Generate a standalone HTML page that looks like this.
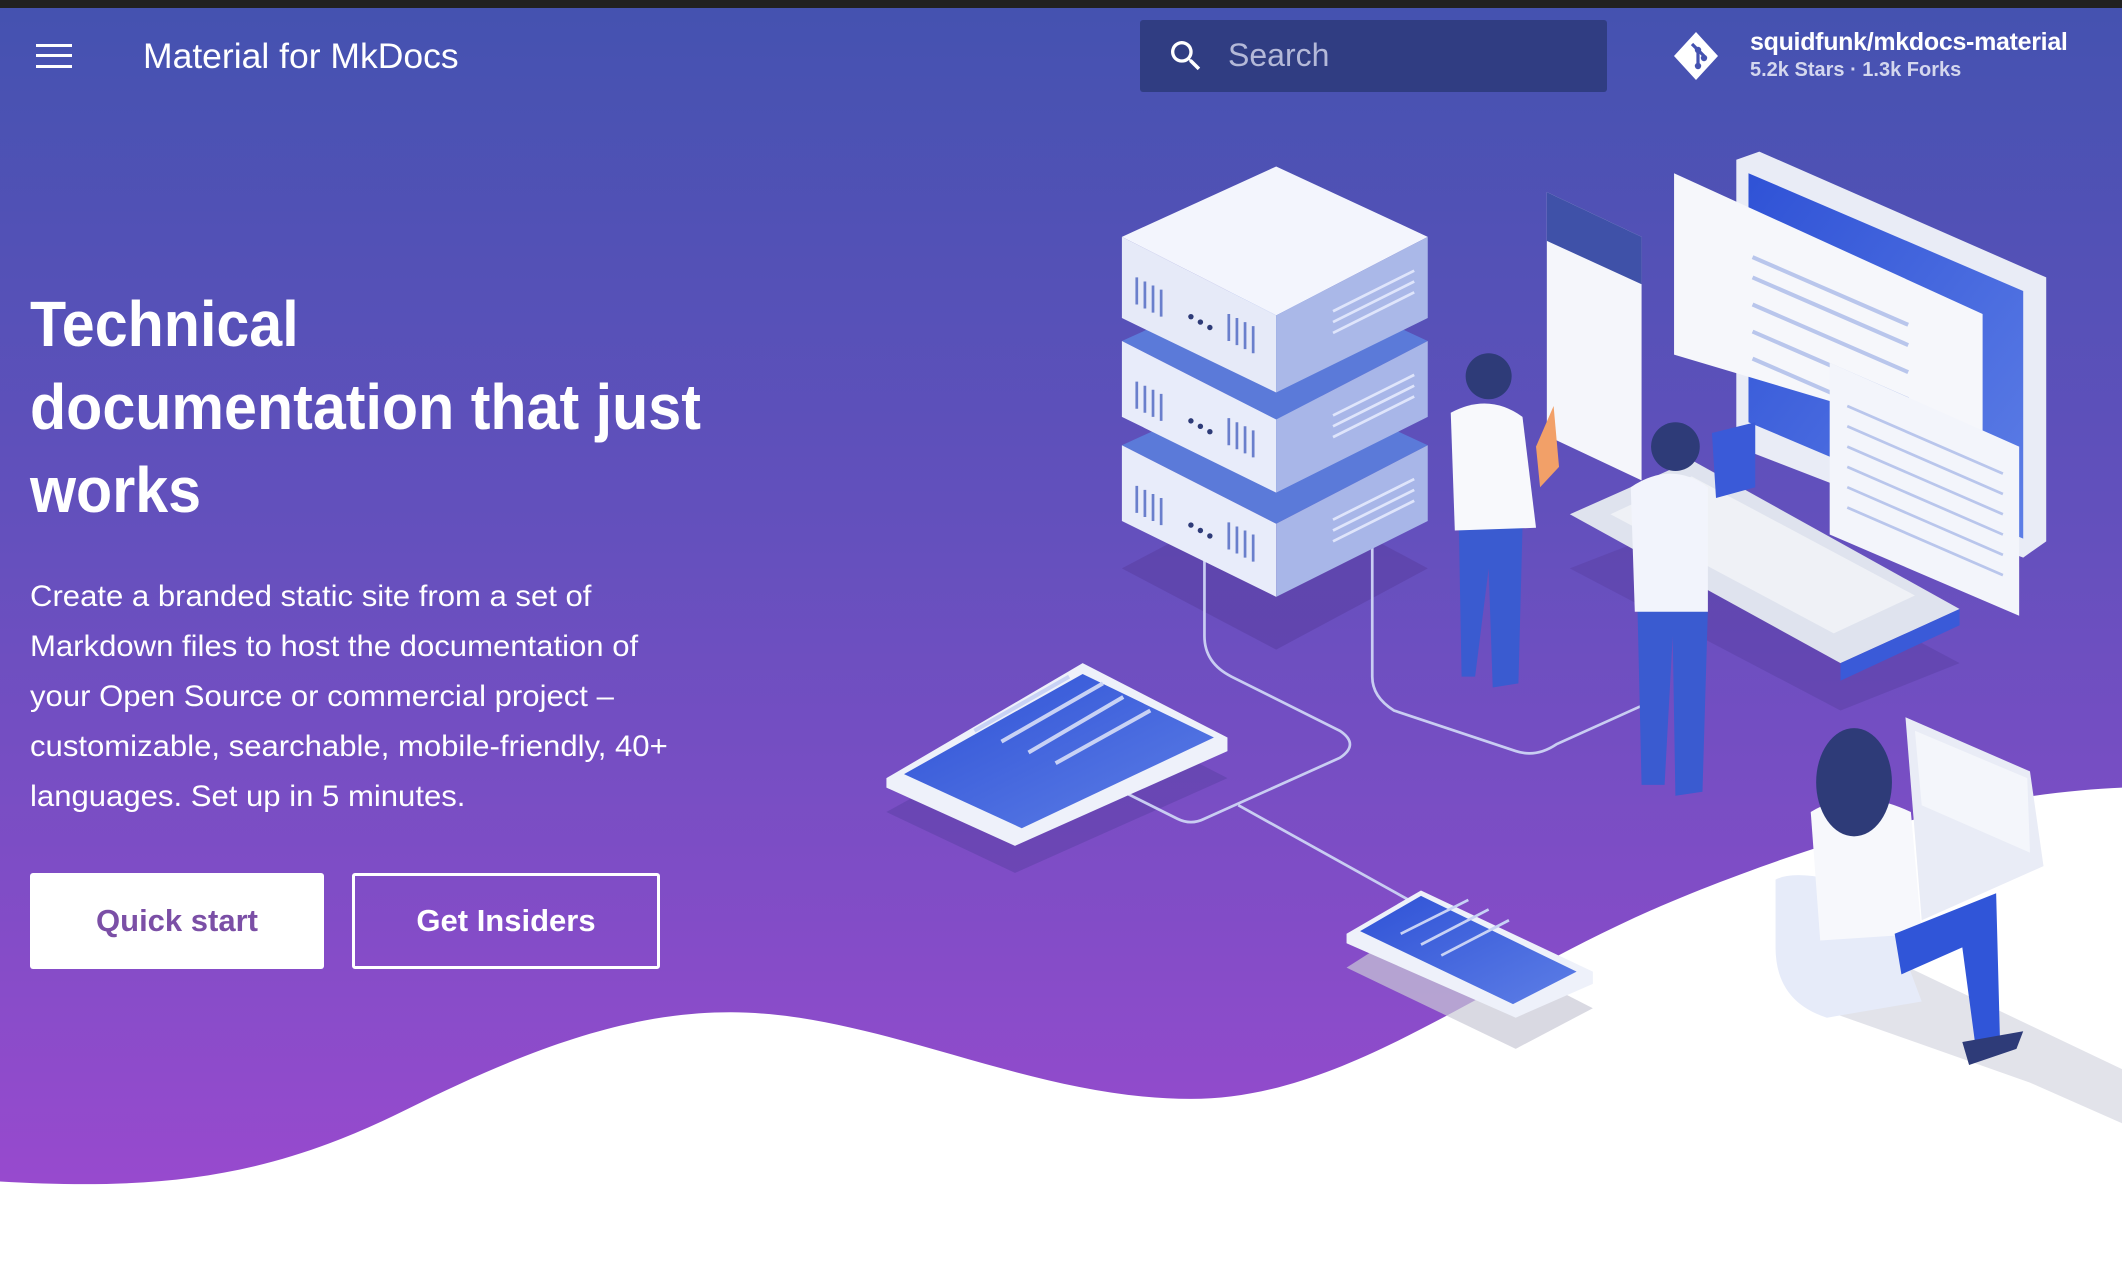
<!DOCTYPE html>
<html><head><meta charset="utf-8"><style>
*{margin:0;padding:0;box-sizing:border-box}
html,body{width:2122px;height:1264px;overflow:hidden;background:#fff;font-family:"Liberation Sans",sans-serif}
.bg{position:absolute;left:0;top:0;width:2122px;height:1264px}
.topbar{position:absolute;left:0;top:0;width:2122px;height:8px;background:#212121}
.ham{position:absolute;left:36px;top:44px;width:36px;height:24px}
.ham i{position:absolute;left:0;width:36px;height:3px;background:#fff}
.title{position:absolute;left:143px;top:36px;color:#fff;font-size:35.5px;white-space:nowrap}
.search{position:absolute;left:1140px;top:20px;width:467px;height:72px;background:#303d82;border-radius:3px}
.search span{position:absolute;left:88px;top:17px;color:#b4b9d8;font-size:32px}
.repo{position:absolute;left:1750px;top:28px;color:#fff;white-space:nowrap}
.repo b{display:block;font-size:25px;letter-spacing:-0.3px}
.repo small{display:block;font-size:20px;color:#d4d7ee;font-weight:bold;margin-top:2px}
h1{position:absolute;left:30px;top:283px;color:#fff;font-size:64px;line-height:83px;font-weight:bold;white-space:nowrap}
h1 span{display:block;transform:scaleX(0.925);transform-origin:left}
p{position:absolute;left:30px;top:572px;color:#fff;font-size:30px;line-height:50px;white-space:nowrap}
p span{display:block;transform:scaleX(1.036);transform-origin:left}
.btn{position:absolute;top:873px;height:96px;border-radius:3px;font-weight:bold;font-size:31px;text-align:center;line-height:96px}
.b1{left:30px;width:294px;background:#fff;color:#7b4fa6}
.b2{left:352px;width:308px;border:3px solid #fff;color:#fff;line-height:90px}
</style></head><body>
<svg class="bg" viewBox="0 0 1568 934" preserveAspectRatio="none">
<defs>
<linearGradient id="g" x1="0" y1="0" x2="0" y2="1">
<stop offset="0" stop-color="#4452b0"/><stop offset="0.45" stop-color="#6450bd"/><stop offset="1" stop-color="#984ace"/></linearGradient>
<linearGradient id="scr" x1="0" y1="0" x2="1" y2="1"><stop offset="0" stop-color="#2f52d6"/><stop offset="1" stop-color="#5d7ee6"/></linearGradient>
</defs>
<rect x="0" y="0" width="1568" height="880" fill="url(#g)"/>
<path d="M0,873 C120,880 200,870 300,820 C400,770 470,748 540,748 C650,748 760,812 880,812 C1000,812 1100,720 1250,660 C1400,600 1500,585 1568,582 L1568,934 L0,934 Z" fill="#fff"/>
<polygon points="829,420 943,360 1055,420 943,480" fill="#5a3fa3" opacity="0.6"/>
<polygon points="1160,420 1250,385 1448,490 1360,525" fill="#5a3fa3" opacity="0.5"/>
<polygon points="655,600 800,520 907,575 750,645" fill="#5a3fa3" opacity="0.5"/>
<polygon points="995,715 1050,680 1177,745 1120,775" fill="#c9c9d6" opacity="0.7"/>
<polygon points="1330,740 1400,710 1568,790 1568,830 1500,800" fill="#e2e3ea"/>
<g fill="none" stroke="#c9cdf2" stroke-width="2">
<path d="M890,410 V470 Q890,490 910,500 L990,540 Q1005,550 990,560 L890,605 Q880,610 870,605 L830,585"/>
<path d="M1014,400 V500 Q1014,515 1030,525 L1120,555 Q1135,560 1150,550 L1212,522"/>
<path d="M915,595 L1050,670"/>
</g>
<g>
<polygon points="829,329 943,277 1055,329 943,387" fill="#5b7ad9"/>
<polygon points="829,329 943,387 943,441 829,385" fill="#e8ecfa"/>
<polygon points="943,387 1055,329 1055,385 943,441" fill="#a8b6e8"/>
<polygon points="829,252 943,200 1055,252 943,310" fill="#5b7ad9"/>
<polygon points="829,252 943,310 943,364 829,308" fill="#e8ecfa"/>
<polygon points="943,310 1055,252 1055,308 943,364" fill="#a8b6e8"/>
<polygon points="829,175 943,123 1055,175 943,233" fill="#f3f5fd"/>
<polygon points="829,175 943,233 943,290 829,235" fill="#e6eaf8"/>
<polygon points="943,233 1055,175 1055,235 943,290" fill="#aab8e8"/>
<g stroke="#6a7fcc" stroke-width="2">
<path d="M840,205 v20 M846,208 v20 M852,211 v20 M858,214 v20 M908,232 v20 M914,235 v20 M920,238 v20 M926,241 v20"/>
<path d="M840,282 v20 M846,285 v20 M852,288 v20 M858,291 v20 M908,309 v20 M914,312 v20 M920,315 v20 M926,318 v20"/>
<path d="M840,359 v20 M846,362 v20 M852,365 v20 M858,368 v20 M908,386 v20 M914,389 v20 M920,392 v20 M926,395 v20"/>
</g>
<g fill="#2e3b78"><circle cx="880" cy="234" r="2"/><circle cx="887" cy="238" r="2"/><circle cx="894" cy="242" r="2"/><circle cx="880" cy="311" r="2"/><circle cx="887" cy="315" r="2"/><circle cx="894" cy="319" r="2"/><circle cx="880" cy="388" r="2"/><circle cx="887" cy="392" r="2"/><circle cx="894" cy="396" r="2"/></g>
<g stroke="#dfe5fb" stroke-width="2"><path d="M985,230 L1045,200 M985,238 L1045,208 M985,246 L1045,216 M985,307 L1045,277 M985,315 L1045,285 M985,323 L1045,293 M985,384 L1045,354 M985,392 L1045,362 M985,400 L1045,370"/></g>
</g>
<polygon points="1283,118 1300,112 1512,205 1512,400 1495,412 1283,330" fill="#e9ecf6"/>
<polygon points="1292,128 1495,215 1495,398 1292,312" fill="url(#scr)"/>
<polygon points="1237,128 1465,232 1465,330 1237,262" fill="#f6f7fb"/>
<g stroke="#b9c6ec" stroke-width="3"><path d="M1295,190 L1410,240 M1295,205 L1410,255 M1295,225 L1410,275 M1295,245 L1410,295 M1295,265 L1410,315"/></g>
<polygon points="1352,268 1492,330 1492,455 1352,395" fill="#f3f5fb"/>
<g stroke="#b9c6ec" stroke-width="2"><path d="M1365,300 L1480,350 M1365,315 L1480,365 M1365,330 L1480,380 M1365,345 L1480,395 M1365,360 L1480,410 M1365,375 L1480,425"/></g>
<polygon points="1143,142 1213,175 1213,355 1143,322" fill="#f5f6fb"/>
<polygon points="1143,142 1213,175 1213,210 1143,178" fill="#3f51a8"/>
<polygon points="1160,380 1250,340 1448,450 1360,490" fill="#dfe3ee"/>
<polygon points="1360,490 1448,450 1448,462 1360,503" fill="#3a5ad8"/>
<polygon points="1190,380 1250,352 1415,440 1355,468" fill="#f5f6fa" opacity="0.7"/>
<polygon points="1078,390 1125,390 1122,505 1103,508 1100,420 1090,500 1080,500" fill="#3a5bd0"/>
<path d="M1072,305 Q1100,290 1125,308 L1135,390 L1075,392 Z" fill="#f8f9fc"/>
<circle cx="1100" cy="278" r="17" fill="#2e3b78"/>
<path d="M1135,330 L1148,300 L1152,345 L1138,360 Z" fill="#f2a068"/>
<polygon points="1210,450 1262,450 1258,585 1238,588 1236,470 1230,580 1213,580" fill="#3a5bd0"/>
<path d="M1205,360 Q1235,340 1262,360 L1262,452 L1208,452 Z" fill="#f2f4fc"/>
<circle cx="1238" cy="330" r="18" fill="#2e3b78"/>
<polygon points="1265,320 1297,312 1297,360 1268,368" fill="#3a5ad8"/>
<polygon points="655,575 800,490 907,545 907,555 750,625 655,582" fill="#eef1fa"/>
<polygon points="668,572 800,498 897,545 755,612" fill="url(#scr)"/>
<g stroke="#c8d2f5" stroke-width="3"><path d="M720,540 L790,500 M740,548 L815,505 M760,556 L830,515 M780,564 L850,525"/></g>
<polygon points="995,690 1050,658 1177,718 1177,727 1120,752 995,697" fill="#eef1fa"/>
<polygon points="1005,688 1050,662 1165,718 1118,742" fill="url(#scr)"/>
<g stroke="#c8d2f5" stroke-width="2"><path d="M1035,690 L1085,665 M1050,698 L1100,672 M1065,706 L1115,680"/></g>
<polygon points="1408,530 1500,570 1510,640 1420,680" fill="#e9ecf6"/>
<polygon points="1415,540 1498,575 1500,630 1420,595" fill="#f4f6fb"/>
<path d="M1312,650 Q1330,640 1390,660 L1420,740 L1350,752 Q1312,740 1312,700 Z" fill="#e6ebf9"/>
<path d="M1338,600 Q1370,580 1412,600 L1420,690 L1345,695 Z" fill="#f7f8fc"/>
<path d="M1400,690 L1475,660 L1478,775 L1460,775 L1450,700 L1405,720 Z" fill="#3055d8"/>
<ellipse cx="1370" cy="578" rx="28" ry="40" fill="#2e3b78"/>
<path d="M1450,770 L1495,762 L1490,775 L1455,787 Z" fill="#2e3b78"/>
</svg>
<div class="topbar"></div>
<div class="ham"><i style="top:0"></i><i style="top:10px"></i><i style="top:21px"></i></div>
<div class="title">Material for MkDocs</div>
<div class="search">
<svg style="position:absolute;left:26px;top:16px" width="40" height="40" viewBox="0 0 24 24"><path fill="#fff" d="M9.5 3A6.5 6.5 0 0 1 16 9.5c0 1.61-.59 3.09-1.56 4.23l.27.27h.79l5 5-1.5 1.5-5-5v-.79l-.27-.27A6.52 6.52 0 0 1 9.5 16 6.5 6.5 0 0 1 3 9.5 6.5 6.5 0 0 1 9.5 3m0 2C7 5 5 7 5 9.5S7 14 9.5 14 14 12 14 9.5 12 5 9.5 5z"/></svg>
<span>Search</span></div>
<svg style="position:absolute;left:1672px;top:30px" width="48" height="52" viewBox="0 0 24 26"><path fill="#fff" d="M12 1 L23 13 L12 25 L1 13 Z"/><path d="M10 7 L13 10 M13 10 V19 M13 10 L16 13" stroke="#4452b0" stroke-width="1.6" fill="none"/><circle cx="13" cy="10" r="1.6" fill="#4452b0"/><circle cx="13" cy="18" r="1.6" fill="#4452b0"/><circle cx="16" cy="14" r="1.6" fill="#4452b0"/></svg>
<div class="repo"><b>squidfunk/mkdocs-material</b><small>5.2k Stars · 1.3k Forks</small></div>
<h1><span>Technical</span><span>documentation that just</span><span>works</span></h1>
<p><span>Create a branded static site from a set of</span><span>Markdown files to host the documentation of</span><span>your Open Source or commercial project –</span><span>customizable, searchable, mobile-friendly, 40+</span><span>languages. Set up in 5 minutes.</span></p>
<div class="btn b1">Quick start</div>
<div class="btn b2">Get Insiders</div>
</body></html>
